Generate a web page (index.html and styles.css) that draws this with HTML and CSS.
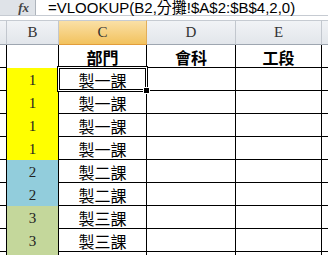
FILE: index.html
```html
<!DOCTYPE html>
<html>
<head>
<meta charset="utf-8">
<link rel="stylesheet" href="styles.css">
</head>
<body>
<div class="app">
  <div class="fbar">
    <div class="fx-box"><span class="fx">fx</span></div>
    <div class="formula">=VLOOKUP(B2,分攤!$A$2:$B$4,2,0)</div>
  </div>
  <div class="gap"></div>
  <div class="sheet">
    <div class="hd hd-a"></div>
    <div class="hd">B</div>
    <div class="hd hd-sel">C</div>
    <div class="hd">D</div>
    <div class="hd">E</div>
    <div class="hd hd-f"></div>

    <div class="c ca"></div><div class="c cb"></div><div class="c cc bold">部門</div><div class="c cd bold">會科</div><div class="c ce bold">工段</div><div class="c cf"></div>

    <div class="c ca"></div><div class="c cb yellow">1</div><div class="c cc">製一課</div><div class="c cd"></div><div class="c ce"></div><div class="c cf"></div>
    <div class="c ca"></div><div class="c cb yellow">1</div><div class="c cc">製一課</div><div class="c cd"></div><div class="c ce"></div><div class="c cf"></div>
    <div class="c ca"></div><div class="c cb yellow">1</div><div class="c cc">製一課</div><div class="c cd"></div><div class="c ce"></div><div class="c cf"></div>
    <div class="c ca"></div><div class="c cb yellow">1</div><div class="c cc">製一課</div><div class="c cd"></div><div class="c ce"></div><div class="c cf"></div>
    <div class="c ca"></div><div class="c cb blue">2</div><div class="c cc">製二課</div><div class="c cd"></div><div class="c ce"></div><div class="c cf"></div>
    <div class="c ca"></div><div class="c cb blue">2</div><div class="c cc">製二課</div><div class="c cd"></div><div class="c ce"></div><div class="c cf"></div>
    <div class="c ca"></div><div class="c cb green">3</div><div class="c cc">製三課</div><div class="c cd"></div><div class="c ce"></div><div class="c cf"></div>
    <div class="c ca"></div><div class="c cb green">3</div><div class="c cc">製三課</div><div class="c cd"></div><div class="c ce"></div><div class="c cf"></div>
    <div class="c ca"></div><div class="c cb green"></div><div class="c cc"></div><div class="c cd"></div><div class="c ce"></div><div class="c cf"></div>

    <div class="selection"></div>
    <div class="handle"></div>
  </div>
</div>
</body>
</html>
```
FILE: styles.css
```css
html, body {
  margin: 0;
  padding: 0;
  background: #fff;
}
.app {
  width: 328px;
  height: 255px;
  overflow: hidden;
  position: relative;
}
.fbar {
  display: flex;
  height: 15px;
  border-bottom: 1px solid #c6cbd2;
}
.fx-box {
  width: 36px;
  background: #dfe3e8;
  border-right: 1px solid #aeb4bc;
  display: flex;
  justify-content: flex-end;
  align-items: center;
  padding-right: 6px;
  box-sizing: border-box;
}
.fx {
  font-family: "Liberation Serif", serif;
  font-style: italic;
  font-weight: bold;
  font-size: 13px;
  color: #444;
  line-height: 15px;
}
.formula {
  font-family: "Liberation Sans", "Noto Sans CJK TC", sans-serif;
  font-size: 15px;
  line-height: 15px;
  padding-left: 12px;
  color: #000;
  white-space: nowrap;
}
.gap {
  height: 4px;
}
.sheet {
  position: relative;
  display: grid;
  grid-template-columns: 7px 52px 88px 89px 86px 6px;
  grid-template-rows: 25px;
  grid-auto-rows: 23px;
}
.hd {
  box-sizing: border-box;
  background: linear-gradient(#f1f3f6, #e2e6eb);
  border-top: 1px solid #c6cbd2;
  border-right: 1px solid #c2c7ce;
  border-bottom: 1px solid #9ea6b0;
  font-family: "Liberation Serif", serif;
  font-size: 15px;
  color: #333;
  display: flex;
  align-items: center;
  justify-content: center;
}
.hd-sel {
  background: linear-gradient(#fae0a6, #f2c25e);
  border-right-color: #e2ae5a;
  border-bottom-color: #e29d3b;
}
.hd-f {
  border-right: none;
}
.c {
  box-sizing: border-box;
  font-family: "Noto Sans CJK TC", sans-serif;
  font-size: 16px;
  color: #000;
  display: flex;
  align-items: center;
  justify-content: center;
  line-height: 1;
  padding-top: 2px;
}
.ca {
  border-right: 1px solid #000;
  border-bottom: 1px solid #000;
}
.cb {
  border-right: 1px solid #000;
  font-family: "Liberation Serif", serif;
  font-size: 15px;
  color: #222;
}
.cc, .cd, .ce {
  border-right: 1px solid #000;
  border-bottom: 1px solid #000;
}
.cf {
  border-bottom: 1px solid #000;
}
.bold {
  font-weight: bold;
}
.yellow { background: #ffff00; }
.blue { background: #92cddc; }
.green { background: #c4d79b; }
.selection {
  position: absolute;
  left: 57px;
  top: 46px;
  width: 91px;
  height: 26px;
  box-sizing: border-box;
  border: 1px solid #000;
  box-shadow: inset 0 0 0 1px #fff, inset 0 0 0 2px #000;
  pointer-events: none;
}
.handle {
  position: absolute;
  left: 143px;
  top: 67px;
  width: 5px;
  height: 5px;
  background: #000;
  border: 1px solid #fff;
}
```
